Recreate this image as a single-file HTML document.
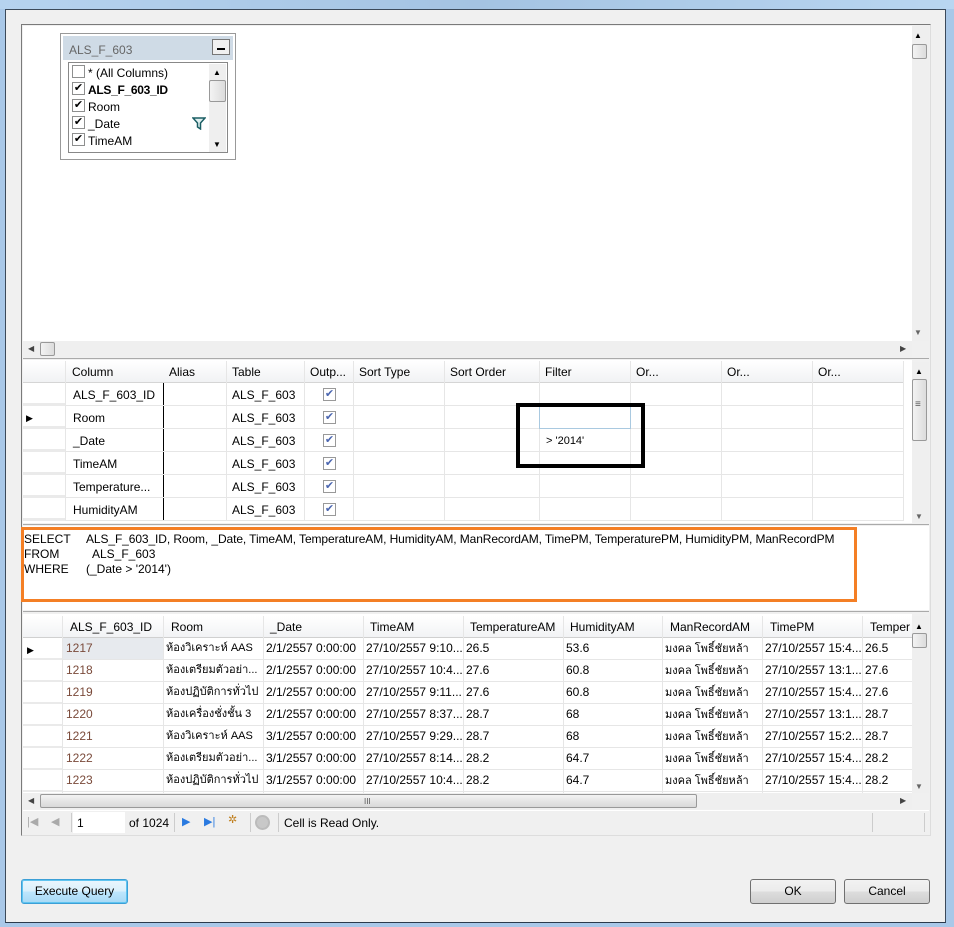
<!DOCTYPE html>
<html><head><meta charset="utf-8"><style>
*{box-sizing:border-box;margin:0;padding:0}
body{width:954px;height:927px;position:relative;overflow:hidden;background:#a9c8e8;font-family:"Liberation Sans",sans-serif;font-size:12px;color:#000}
.a{position:absolute}
.t{position:absolute;white-space:nowrap;font-size:12px;line-height:14px}
.th{font-family:"Liberation Sans","Noto Sans CJK SC",sans-serif;font-size:11px}
.vl{position:absolute;width:1px;background:#e6e6e6}
.hl{position:absolute;height:1px;background:#e6e6e6}
.cb{position:absolute;width:13px;height:13px;border:1px solid #8e8f8f;background:#fff;font-size:11px;line-height:11px;text-align:center}
.btn{position:absolute;height:25px;border:1px solid #707070;border-radius:3px;background:linear-gradient(#f2f2f2,#ebebeb 50%,#dddddd 51%,#cfcfcf);text-align:center;line-height:23px;font-size:12px}
.sb{position:absolute;background:#efefef}
.thumb{position:absolute;border:1px solid #999;border-radius:2px;background:linear-gradient(90deg,#f3f3f3,#dcdcdc)}
</style></head><body>
<div class="a" style="left:0;top:0;width:954px;height:9px;background:linear-gradient(90deg,#b6d3ef,#a4c3e2,#b9d6f1)"></div>
<div class="a" style="left:5px;top:9px;width:941px;height:914px;background:#f0f0f0;border:1px solid #3c4a5a;border-bottom-color:#2b3a4c"></div>
<div class="a" style="left:21px;top:24px;width:910px;height:812px;border:1px solid #7a7a7a;border-right-color:#ddd;border-bottom-color:#ddd;background:#f0f0f0"></div>
<div class="a" style="left:23px;top:26px;width:889px;height:315px;background:#fff"></div>
<div class="sb" style="left:912px;top:26px;width:17px;height:315px"></div>
<div class="t" style="left:914px;top:29px;font-size:8px">▲</div>
<div class="thumb" style="left:912px;top:44px;width:15px;height:15px"></div>
<div class="t" style="left:914px;top:326px;font-size:8px;color:#666">▼</div>
<div class="sb" style="left:23px;top:341px;width:889px;height:16px"></div>
<div class="t" style="left:28px;top:342px;font-size:8px;color:#444">◀</div>
<div class="thumb" style="left:40px;top:342px;width:15px;height:14px"></div>
<div class="t" style="left:900px;top:342px;font-size:8px;color:#444">▶</div>
<div class="hl" style="left:23px;top:358px;width:906px;background:#aaa"></div>
<div class="a" style="left:60px;top:33px;width:176px;height:127px;border:1px solid #999;background:#fff"></div>
<div class="a" style="left:63px;top:36px;width:170px;height:24px;background:#cfdbe6"></div>
<div class="t" style="left:69px;top:43px;color:#666">ALS_F_603</div>
<div class="a" style="left:212px;top:39px;width:18px;height:16px;border:1px solid #777;background:#f0f0f0"></div>
<div class="a" style="left:217px;top:48px;width:8px;height:2px;background:#000"></div>
<div class="a" style="left:68px;top:62px;width:160px;height:91px;border:1px solid #888;background:#fff"></div>
<div class="cb" style="left:72px;top:65px"></div><div class="t" style="left:88px;top:66px">* (All Columns)</div>
<div class="cb" style="left:72px;top:82px">✔</div><div class="t" style="left:88px;top:83px;font-weight:bold;letter-spacing:-0.3px">ALS_F_603_ID</div>
<div class="cb" style="left:72px;top:99px">✔</div><div class="t" style="left:88px;top:100px">Room</div>
<div class="cb" style="left:72px;top:116px">✔</div><div class="t" style="left:88px;top:117px">_Date</div>
<svg class="a" style="left:192px;top:117px" width="14" height="13" viewBox="0 0 14 13"><path d="M1 1H13L8.5 6V12L5.5 10V6Z" fill="#e0f0f0" stroke="#1b5e64" stroke-width="1.5"/></svg>
<div class="cb" style="left:72px;top:133px">✔</div><div class="t" style="left:88px;top:134px">TimeAM</div>
<div class="sb" style="left:209px;top:64px;width:17px;height:88px"></div>
<div class="t" style="left:213px;top:66px;font-size:8px">▲</div>
<div class="thumb" style="left:209px;top:80px;width:17px;height:22px"></div>
<div class="t" style="left:213px;top:138px;font-size:8px">▼</div>

<div class="a" style="left:23px;top:360px;width:889px;height:163px;background:#fff"></div>
<div class="a" style="left:23px;top:361px;width:881px;height:21px;background:linear-gradient(#fff,#f1f2f4)"></div>
<div class="hl" style="left:23px;top:382px;width:881px;background:#d5d5d5"></div>
<div class="t" style="left:72px;top:365px">Column</div>
<div class="t" style="left:169px;top:365px">Alias</div>
<div class="t" style="left:232px;top:365px">Table</div>
<div class="t" style="left:310px;top:365px">Outp...</div>
<div class="t" style="left:359px;top:365px">Sort Type</div>
<div class="t" style="left:450px;top:365px">Sort Order</div>
<div class="t" style="left:545px;top:365px">Filter</div>
<div class="t" style="left:636px;top:365px">Or...</div>
<div class="t" style="left:727px;top:365px">Or...</div>
<div class="t" style="left:818px;top:365px">Or...</div>
<div class="vl" style="left:65px;top:361px;height:160px"></div>
<div class="vl" style="left:163px;top:383px;height:138px;background:#000"></div>
<div class="vl" style="left:226px;top:361px;height:160px"></div>
<div class="vl" style="left:304px;top:361px;height:160px"></div>
<div class="vl" style="left:353px;top:361px;height:160px"></div>
<div class="vl" style="left:444px;top:361px;height:160px"></div>
<div class="vl" style="left:539px;top:361px;height:160px"></div>
<div class="vl" style="left:630px;top:361px;height:160px"></div>
<div class="vl" style="left:721px;top:361px;height:160px"></div>
<div class="vl" style="left:812px;top:361px;height:160px"></div>
<div class="vl" style="left:903px;top:361px;height:160px"></div>
<div class="a" style="left:23px;top:383px;width:42px;height:138px;background:repeating-linear-gradient(#fff 0 20px,#eaeaea 20px 23px)"></div>
<div class="hl" style="left:66px;top:405px;width:838px"></div>
<div class="hl" style="left:66px;top:428px;width:838px"></div>
<div class="hl" style="left:66px;top:451px;width:838px"></div>
<div class="hl" style="left:66px;top:474px;width:838px"></div>
<div class="hl" style="left:66px;top:497px;width:838px"></div>
<div class="hl" style="left:66px;top:520px;width:838px"></div>
<div class="t" style="left:26px;top:411px;font-size:9px">▶</div>
<div class="t" style="left:73px;top:388px">ALS_F_603_ID</div><div class="t" style="left:232px;top:388px">ALS_F_603</div>
<div class="t" style="left:73px;top:411px">Room</div><div class="t" style="left:232px;top:411px">ALS_F_603</div>
<div class="t" style="left:73px;top:434px">_Date</div><div class="t" style="left:232px;top:434px">ALS_F_603</div>
<div class="t" style="left:73px;top:457px">TimeAM</div><div class="t" style="left:232px;top:457px">ALS_F_603</div>
<div class="t" style="left:73px;top:480px">Temperature...</div><div class="t" style="left:232px;top:480px">ALS_F_603</div>
<div class="t" style="left:73px;top:503px">HumidityAM</div><div class="t" style="left:232px;top:503px">ALS_F_603</div>
<div class="cb" style="left:323px;top:388px;color:#4b66b0;border-color:#999">✔</div>
<div class="cb" style="left:323px;top:411px;color:#4b66b0;border-color:#999">✔</div>
<div class="cb" style="left:323px;top:434px;color:#4b66b0;border-color:#999">✔</div>
<div class="cb" style="left:323px;top:457px;color:#4b66b0;border-color:#999">✔</div>
<div class="cb" style="left:323px;top:480px;color:#4b66b0;border-color:#999">✔</div>
<div class="cb" style="left:323px;top:503px;color:#4b66b0;border-color:#999">✔</div>
<div class="a" style="left:539px;top:406px;width:92px;height:23px;border:1px solid #a9c9e0;border-top:none"></div>
<div class="t" style="left:546px;top:434px;font-size:11px">&gt; '2014'</div>
<div class="a" style="left:516px;top:403px;width:129px;height:65px;border:4px solid #000"></div>
<div class="sb" style="left:912px;top:362px;width:17px;height:160px"></div>
<div class="t" style="left:915px;top:365px;font-size:8px">▲</div>
<div class="thumb" style="left:912px;top:379px;width:15px;height:62px"></div>
<div class="t" style="left:915px;top:398px;font-size:10px;color:#555">≡</div>
<div class="t" style="left:915px;top:510px;font-size:8px;color:#666">▼</div>
<div class="hl" style="left:23px;top:524px;width:906px;background:#aaa"></div>

<div class="a" style="left:23px;top:526px;width:906px;height:84px;background:#fff"></div>
<div class="t" style="left:24px;top:532px">SELECT</div><div class="t" style="left:86px;top:532px;letter-spacing:-0.1px">ALS_F_603_ID, Room, _Date, TimeAM, TemperatureAM, HumidityAM, ManRecordAM, TimePM, TemperaturePM, HumidityPM, ManRecordPM</div>
<div class="t" style="left:24px;top:547px">FROM</div><div class="t" style="left:92px;top:547px">ALS_F_603</div>
<div class="t" style="left:24px;top:562px">WHERE</div><div class="t" style="left:86px;top:562px">(_Date &gt; '2014')</div>
<div class="a" style="left:21px;top:527px;width:836px;height:75px;border:3px solid #f47f25"></div>
<div class="hl" style="left:23px;top:611px;width:906px;background:#aaa"></div>

<div class="a" style="left:23px;top:614px;width:889px;height:180px;background:#fff"></div>
<div class="a" style="left:23px;top:616px;width:889px;height:21px;background:linear-gradient(#fff,#f2f3f5)"></div>
<div class="hl" style="left:23px;top:637px;width:889px;background:#d0d0d0"></div>
<div class="t" style="left:70px;top:620px">ALS_F_603_ID</div>
<div class="t" style="left:171px;top:620px">Room</div>
<div class="t" style="left:270px;top:620px">_Date</div>
<div class="t" style="left:370px;top:620px">TimeAM</div>
<div class="t" style="left:470px;top:620px">TemperatureAM</div>
<div class="t" style="left:570px;top:620px">HumidityAM</div>
<div class="t" style="left:670px;top:620px">ManRecordAM</div>
<div class="t" style="left:770px;top:620px">TimePM</div>
<div class="t" style="left:870px;top:620px">Temper</div>
<div class="a" style="left:23px;top:638px;width:39px;height:155px;background:repeating-linear-gradient(#fff 0 20px,#eaeaea 20px 22px)"></div>
<div class="vl" style="left:62px;top:616px;height:177px"></div>
<div class="vl" style="left:163px;top:616px;height:177px"></div>
<div class="vl" style="left:263px;top:616px;height:177px"></div>
<div class="vl" style="left:363px;top:616px;height:177px"></div>
<div class="vl" style="left:463px;top:616px;height:177px"></div>
<div class="vl" style="left:563px;top:616px;height:177px"></div>
<div class="vl" style="left:662px;top:616px;height:177px"></div>
<div class="vl" style="left:762px;top:616px;height:177px"></div>
<div class="vl" style="left:862px;top:616px;height:177px"></div>
<div class="a" style="left:63px;top:638px;width:100px;height:21px;background:#e7eaee"></div>
<div class="hl" style="left:63px;top:659px;width:849px"></div>
<div class="hl" style="left:63px;top:681px;width:849px"></div>
<div class="hl" style="left:63px;top:703px;width:849px"></div>
<div class="hl" style="left:63px;top:725px;width:849px"></div>
<div class="hl" style="left:63px;top:747px;width:849px"></div>
<div class="hl" style="left:63px;top:769px;width:849px"></div>
<div class="hl" style="left:63px;top:791px;width:849px"></div>
<div class="t" style="left:27px;top:643px;font-size:9px">▶</div>

<div class="t" style="left:66px;top:641px;color:#7a4a3a">1217</div><div class="t th" style="left:166px;top:641px">ห้องวิเคราะห์ AAS</div><div class="t" style="left:266px;top:641px">2/1/2557 0:00:00</div><div class="t" style="left:366px;top:641px">27/10/2557 9:10...</div><div class="t" style="left:466px;top:641px">26.5</div><div class="t" style="left:566px;top:641px">53.6</div><div class="t th" style="left:665px;top:642px">มงคล โพธิ์ชัยหล้า</div><div class="t" style="left:765px;top:641px">27/10/2557 15:4...</div><div class="t" style="left:865px;top:641px">26.5</div>
<div class="t" style="left:66px;top:663px;color:#7a4a3a">1218</div><div class="t th" style="left:166px;top:663px">ห้องเตรียมตัวอย่า...</div><div class="t" style="left:266px;top:663px">2/1/2557 0:00:00</div><div class="t" style="left:366px;top:663px">27/10/2557 10:4...</div><div class="t" style="left:466px;top:663px">27.6</div><div class="t" style="left:566px;top:663px">60.8</div><div class="t th" style="left:665px;top:664px">มงคล โพธิ์ชัยหล้า</div><div class="t" style="left:765px;top:663px">27/10/2557 13:1...</div><div class="t" style="left:865px;top:663px">27.6</div>
<div class="t" style="left:66px;top:685px;color:#7a4a3a">1219</div><div class="t th" style="left:166px;top:685px">ห้องปฏิบัติการทั่วไป</div><div class="t" style="left:266px;top:685px">2/1/2557 0:00:00</div><div class="t" style="left:366px;top:685px">27/10/2557 9:11...</div><div class="t" style="left:466px;top:685px">27.6</div><div class="t" style="left:566px;top:685px">60.8</div><div class="t th" style="left:665px;top:686px">มงคล โพธิ์ชัยหล้า</div><div class="t" style="left:765px;top:685px">27/10/2557 15:4...</div><div class="t" style="left:865px;top:685px">27.6</div>
<div class="t" style="left:66px;top:707px;color:#7a4a3a">1220</div><div class="t th" style="left:166px;top:707px">ห้องเครื่องชั่งชั้น 3</div><div class="t" style="left:266px;top:707px">2/1/2557 0:00:00</div><div class="t" style="left:366px;top:707px">27/10/2557 8:37...</div><div class="t" style="left:466px;top:707px">28.7</div><div class="t" style="left:566px;top:707px">68</div><div class="t th" style="left:665px;top:708px">มงคล โพธิ์ชัยหล้า</div><div class="t" style="left:765px;top:707px">27/10/2557 13:1...</div><div class="t" style="left:865px;top:707px">28.7</div>
<div class="t" style="left:66px;top:729px;color:#7a4a3a">1221</div><div class="t th" style="left:166px;top:729px">ห้องวิเคราะห์ AAS</div><div class="t" style="left:266px;top:729px">3/1/2557 0:00:00</div><div class="t" style="left:366px;top:729px">27/10/2557 9:29...</div><div class="t" style="left:466px;top:729px">28.7</div><div class="t" style="left:566px;top:729px">68</div><div class="t th" style="left:665px;top:730px">มงคล โพธิ์ชัยหล้า</div><div class="t" style="left:765px;top:729px">27/10/2557 15:2...</div><div class="t" style="left:865px;top:729px">28.7</div>
<div class="t" style="left:66px;top:751px;color:#7a4a3a">1222</div><div class="t th" style="left:166px;top:751px">ห้องเตรียมตัวอย่า...</div><div class="t" style="left:266px;top:751px">3/1/2557 0:00:00</div><div class="t" style="left:366px;top:751px">27/10/2557 8:14...</div><div class="t" style="left:466px;top:751px">28.2</div><div class="t" style="left:566px;top:751px">64.7</div><div class="t th" style="left:665px;top:752px">มงคล โพธิ์ชัยหล้า</div><div class="t" style="left:765px;top:751px">27/10/2557 15:4...</div><div class="t" style="left:865px;top:751px">28.2</div>
<div class="t" style="left:66px;top:773px;color:#7a4a3a">1223</div><div class="t th" style="left:166px;top:773px">ห้องปฏิบัติการทั่วไป</div><div class="t" style="left:266px;top:773px">3/1/2557 0:00:00</div><div class="t" style="left:366px;top:773px">27/10/2557 10:4...</div><div class="t" style="left:466px;top:773px">28.2</div><div class="t" style="left:566px;top:773px">64.7</div><div class="t th" style="left:665px;top:774px">มงคล โพธิ์ชัยหล้า</div><div class="t" style="left:765px;top:773px">27/10/2557 15:4...</div><div class="t" style="left:865px;top:773px">28.2</div>

<div class="sb" style="left:912px;top:616px;width:17px;height:177px"></div>
<div class="t" style="left:915px;top:620px;font-size:8px">▲</div>
<div class="thumb" style="left:912px;top:633px;width:15px;height:15px"></div>
<div class="t" style="left:915px;top:780px;font-size:8px;color:#666">▼</div>
<div class="sb" style="left:23px;top:793px;width:889px;height:16px"></div>
<div class="t" style="left:28px;top:794px;font-size:8px;color:#444">◀</div>
<div class="thumb" style="left:40px;top:794px;width:657px;height:14px;background:linear-gradient(#f3f3f3,#d8d8d8)"></div>
<div class="t" style="left:364px;top:795px;font-size:8px;color:#555">III</div>
<div class="t" style="left:900px;top:794px;font-size:8px;color:#444">▶</div>
<div class="a" style="left:23px;top:810px;width:906px;height:25px;background:#f0f0f0;border-top:1px solid #fff"></div>
<div class="t" style="left:27px;top:815px;color:#aaa;font-size:11px">|◀</div>
<div class="t" style="left:51px;top:815px;color:#aaa;font-size:11px">◀</div>
<div class="vl" style="left:71px;top:813px;height:19px;background:#ccc"></div>
<div class="a" style="left:73px;top:812px;width:52px;height:21px;background:#fff"></div>
<div class="t" style="left:77px;top:816px">1</div>
<div class="t" style="left:129px;top:816px">of 1024</div>
<div class="vl" style="left:174px;top:813px;height:19px;background:#ccc"></div>
<div class="t" style="left:182px;top:815px;color:#2a7ae0;font-size:11px">▶</div>
<div class="t" style="left:204px;top:815px;color:#2a7ae0;font-size:11px">▶|</div>
<div class="t" style="left:228px;top:813px;color:#c08020;font-size:11px">✲</div>
<div class="vl" style="left:250px;top:813px;height:19px;background:#ccc"></div>
<div class="a" style="left:255px;top:815px;width:15px;height:15px;border-radius:50%;background:#c8c8c8;border:2px solid #bbb"></div>
<div class="vl" style="left:278px;top:813px;height:19px;background:#ccc"></div>
<div class="t" style="left:284px;top:816px">Cell is Read Only.</div>
<div class="vl" style="left:872px;top:813px;height:19px;background:#ccc"></div>
<div class="vl" style="left:924px;top:813px;height:19px;background:#ccc"></div>
<div class="btn" style="left:21px;top:879px;width:107px;border-color:#3c9fd6;background:linear-gradient(#eaf6fd,#d9f0fc 50%,#bee6fd 51%,#a7d9f5);box-shadow:inset 0 0 0 1px #5fc4f0">Execute Query</div>
<div class="btn" style="left:750px;top:879px;width:86px">OK</div>
<div class="btn" style="left:844px;top:879px;width:86px">Cancel</div>
</body></html>
